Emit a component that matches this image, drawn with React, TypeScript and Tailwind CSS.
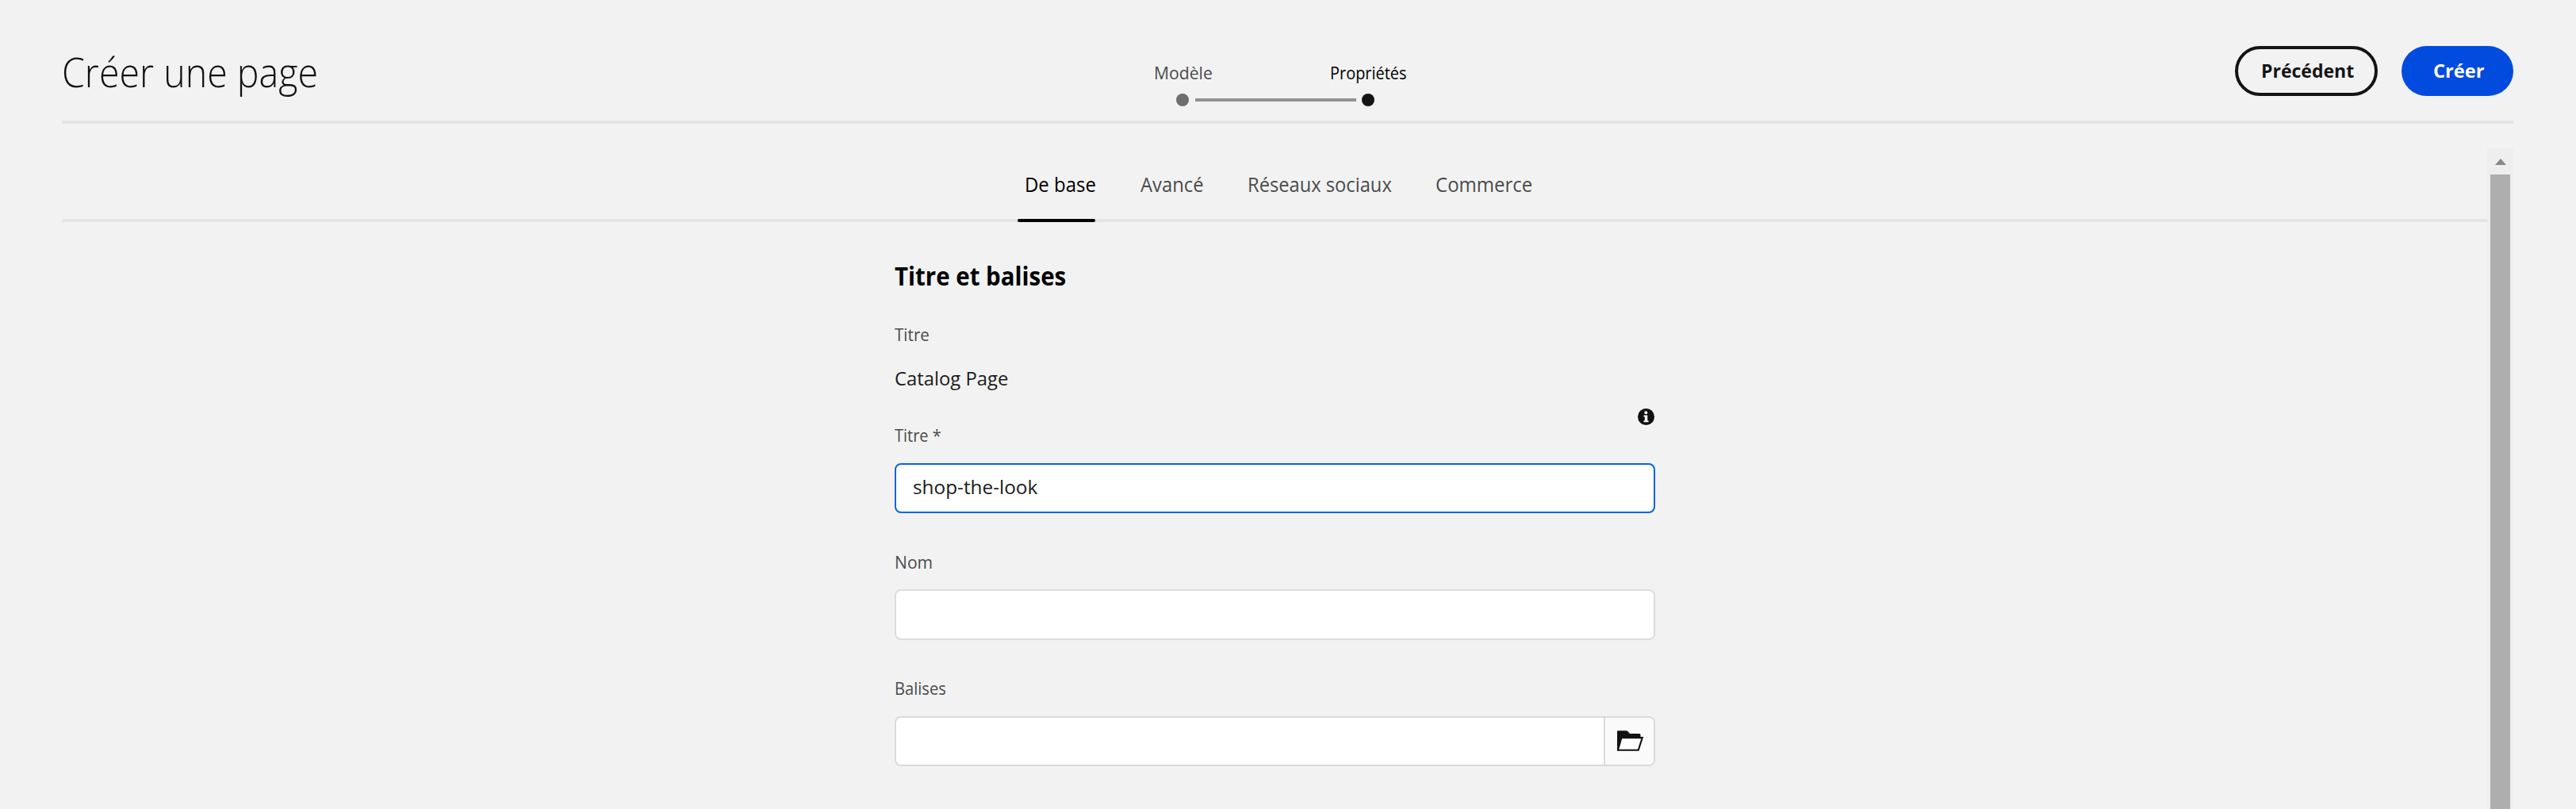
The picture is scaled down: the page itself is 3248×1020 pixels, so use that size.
import { useLayoutEffect, useRef, useState } from "react";

/* Single-line text set to an exact measure, narrowing the glyphs evenly. */
function Fit({ text, width, className }: { text: string; width: number; className: string }) {
  const ref = useRef<HTMLSpanElement>(null);
  const [scale, setScale] = useState(1);
  useLayoutEffect(() => {
    if (ref.current) setScale(width / ref.current.offsetWidth);
  }, [width, text]);
  return (
    <span className="block shrink-0" style={{ width }}>
      <span
        ref={ref}
        className={"inline-block origin-left whitespace-nowrap align-top " + className}
        style={{ transform: `scaleX(${scale})` }}
      >
        {text}
      </span>
    </span>
  );
}

const label = "text-[22px] leading-[30px] text-[#4b4b4b]";
const body = "text-[24.5px] leading-[34px] text-[#1b1b1b]";
const tab = "text-[25px] leading-[34px] text-[#4b4b4b]";

function Header() {
  return (
    <header className="flex h-[152px] items-start justify-between">
      <div className="w-[1377px] pt-[55px]">
        <Fit text="Créer une page" width={323} className="text-[52px] leading-[70px] font-light text-[#111]" />
      </div>
      <div className="w-[319px] pt-[76px]">
        <div className="flex justify-between">
          <Fit text="Modèle" width={74} className="text-[22px] leading-[30px] text-[#4b4b4b]" />
          <Fit text="Propriétés" width={97} className="text-[22px] leading-[30px] text-black" />
        </div>
        <div className="mt-3 ml-[28px] flex items-center">
          <span className="size-4 rounded-full bg-[#6e6e6e]" />
          <span className="mx-[7.5px] h-1 w-[203px] bg-[#929292]" />
          <span className="size-4 rounded-full bg-[#141414]" />
        </div>
      </div>
      <div className="flex flex-1 justify-end gap-[30px] pt-[58px]">
        <button className="flex h-[63px] w-[180px] items-center justify-center rounded-full border-4 border-[#141414] pl-0.5">
          <Fit text="Précédent" width={117} className="-mt-0.5 text-[24px] leading-[32px] font-bold text-[#141414]" />
        </button>
        <button className="flex h-[63px] w-[141px] items-center justify-center rounded-full bg-[#024bdf] pl-0.5">
          <Fit text="Créer" width={64} className="-mt-0.5 text-[24px] leading-[32px] font-bold text-white" />
        </button>
      </div>
    </header>
  );
}

function Tabs() {
  return (
    <nav className="flex h-[93px] border-b-4 border-[#e4e4e4] pt-[28px] pl-[1205px]">
      <div className="-mb-1 flex w-[98px] flex-col justify-between">
        <div className="pl-[9px]">
          <Fit text="De base" width={90} className="text-[25px] leading-[34px] text-black" />
        </div>
        <div className="h-1 rounded-sm bg-black" />
      </div>
      <div className="flex gap-[55px] pl-[57px]">
        <Fit text="Avancé" width={80} className={tab} />
        <Fit text="Réseaux sociaux" width={182} className={tab} />
        <Fit text="Commerce" width={122} className={tab} />
      </div>
    </nav>
  );
}

function FolderIcon() {
  return (
    <svg className="mb-0.5 ml-0.5 h-[26px] w-[34px]" viewBox="0 0 34 26">
      <path
        fill="#111"
        d="M0 1.2Q0 .2 1 .2H11.5Q12.8.2 13.6 1.3L16 4H28Q29.5 4 29.5 5.5V8H33.2L27.5 25.8H0Z"
      />
      <path fill="#fdfdfd" d="M6.2 10.2H30.3L26 23.8H2.3Z" />
    </svg>
  );
}

function InfoIcon() {
  return (
    <svg className="size-[21px]" viewBox="0 0 21 21">
      <circle cx="10.5" cy="10.5" r="10.5" fill="#111" />
      <circle cx="10.3" cy="5.3" r="2" fill="#f1f1f1" />
      <path fill="#f1f1f1" d="M7.5 8.5H12.3V15.3H13.6V17.2H7.5V15.3H8.8V10.4H7.5Z" />
    </svg>
  );
}

function Form() {
  return (
    <section className="ml-[1050px] w-[959px]">
      <div className="pt-[45px]">
        <Fit text="Titre et balises" width={216} className="text-[33px] leading-[46px] font-bold text-black" />
      </div>
      <div className="mt-[35px]">
        <Fit text="Titre" width={44} className={label} />
      </div>
      <div className="mt-[24px]">
        <Fit text="Catalog Page" width={143} className={body} />
      </div>
      <div className="mt-[21px] flex h-[69px] justify-between">
        <div className="pt-[18px]">
          <Fit text="Titre *" width={59} className={label} />
        </div>
        <div className="pr-[1px]">
          <InfoIcon />
        </div>
      </div>
      <div className="flex h-[63px] items-center rounded-lg border-2 border-[#0265e6] bg-white pb-[3px] pl-[21px]">
        <Fit text="shop-the-look" width={157} className={body} />
      </div>
      <div className="mt-[46px]">
        <Fit text="Nom" width={48} className={label} />
      </div>
      <div className="mt-[20px] h-[64px] rounded-lg border-2 border-[#dcdcdc] bg-white" />
      <div className="mt-[45px]">
        <Fit text="Balises" width={65} className={label} />
      </div>
      <div className="mt-[21px] flex h-[63px] overflow-hidden rounded-lg border-2 border-[#dadada] bg-white">
        <div className="flex-1" />
        <button className="flex w-[63px] items-center justify-center border-l-2 border-[#dadada] bg-[#fafafa]">
          <FolderIcon />
        </button>
      </div>
    </section>
  );
}

function Scrollbar() {
  return (
    <div className="flex h-[833px] w-[33px] shrink-0 flex-col items-center bg-[#eee]">
      <svg className="mt-[13px] h-2 w-[14px]" viewBox="0 0 14 8">
        <path d="M7 0L14 8H0Z" fill="#888" />
      </svg>
      <div className="mt-3 w-[25px] flex-1 bg-[#aeaeae]" />
    </div>
  );
}

export default function App() {
  return (
    <div className="h-[1020px] w-[3248px] overflow-hidden bg-[#f2f2f2] pr-[79px] pl-[78px] font-['Open_Sans',sans-serif] font-stretch-[88%]">
      <Header />
      <div className="h-1 bg-[#e4e4e4]" />
      <div className="mt-[31px] flex">
        <main className="h-[833px] flex-1">
          <Tabs />
          <Form />
        </main>
        <Scrollbar />
      </div>
    </div>
  );
}
